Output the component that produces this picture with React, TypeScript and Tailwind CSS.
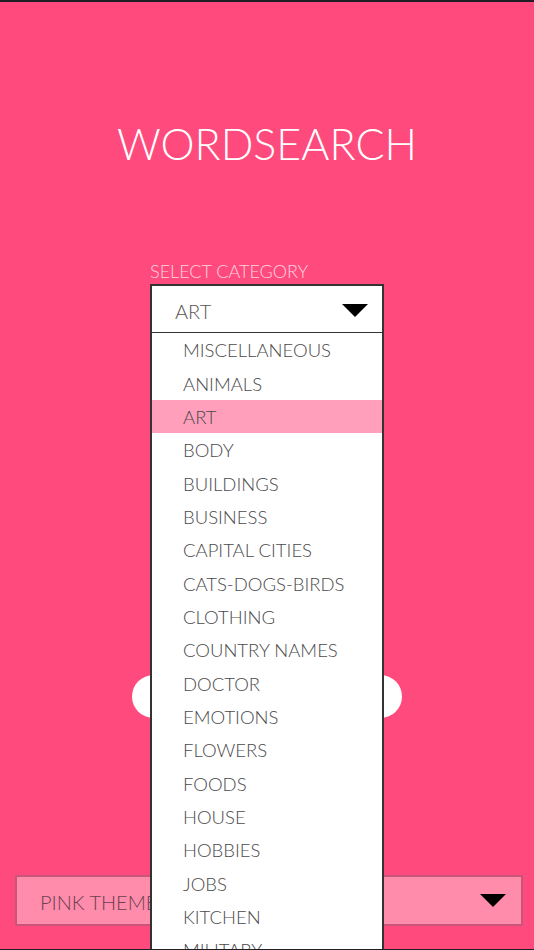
import React from "react";

const items = [
  "MISCELLANEOUS",
  "ANIMALS",
  "ART",
  "BODY",
  "BUILDINGS",
  "BUSINESS",
  "CAPITAL CITIES",
  "CATS-DOGS-BIRDS",
  "CLOTHING",
  "COUNTRY NAMES",
  "DOCTOR",
  "EMOTIONS",
  "FLOWERS",
  "FOODS",
  "HOUSE",
  "HOBBIES",
  "JOBS",
  "KITCHEN",
  "MILITARY",
  "MUSIC",
];

function Tri({ className }: { className?: string }) {
  return (
    <svg className={className} viewBox="0 0 26 13" width="26" height="13">
      <polygon points="0,0 26,0 13,13" fill="#000" />
    </svg>
  );
}

export default function App() {
  return (
    <div
      className="relative w-[534px] h-[950px] overflow-hidden bg-[#ff4a7d] border-t-2 border-b border-[#1e1e24] flex flex-col items-center"
      style={{ fontFamily: "Lato, 'Open Sans', sans-serif" }}
    >
      <h1 className="mt-[115px] text-[43px] leading-[54px] font-light text-white tracking-[0px]">
        WORDSEARCH
      </h1>
      <div className="mt-[89px] w-[234px] flex flex-col">
        <div className="text-[18px] leading-[22px] font-light text-[#ffd3de]">
          SELECT CATEGORY
        </div>
        <div className="relative mt-[2px]">
          <div className="h-[50px] bg-white border-2 border-[#333] flex items-center justify-between pl-[23px] pr-[14px]">
            <span className="text-[20px] font-light text-[#555] mt-[3px]">ART</span>
            <Tri className="mt-[3px]" />
          </div>
          <div className="absolute left-0 top-[49px] w-[234px] h-[700px] bg-white border-x-2 border-[#333] z-10 flex flex-col">
            {items.map((it) => (
              <div
                key={it}
                className={
                  "h-[33.33px] shrink-0 flex items-center pl-[31px] pt-[3px] text-[18.5px] font-light text-[#4a4a4a] " +
                  (it === "ART" ? "bg-[#ff9fbc]" : "")
                }
              >
                {it}
              </div>
            ))}
          </div>
        </div>
      </div>
      <button className="mt-[341px] w-[270px] h-[43px] rounded-full bg-white" />
      <div className="mt-[157px] w-[508px] h-[51px] ml-[4px] bg-[#ff8cab] border-2 border-[#c9567a] flex items-center justify-between pl-[23px] pr-[15px]">
        <span className="text-[20px] font-light text-[#6b4050] mt-[3px]">PINK THEME</span>
        <Tri />
      </div>
    </div>
  );
}
